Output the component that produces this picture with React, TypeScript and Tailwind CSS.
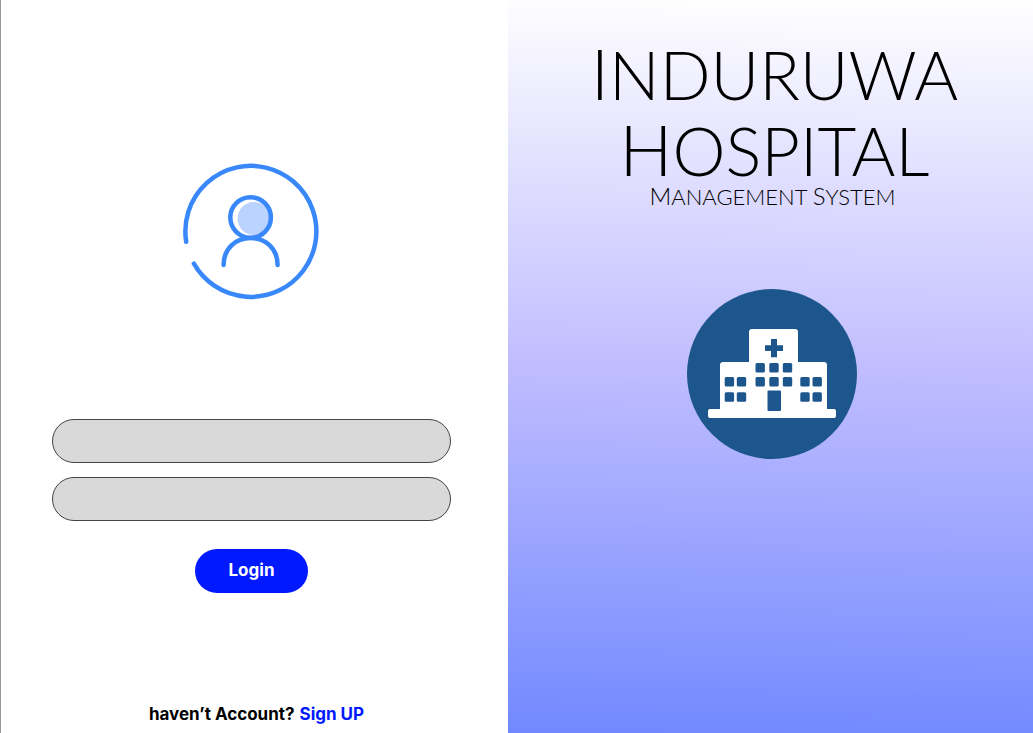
function UserIcon() {
  return (
    <svg viewBox="0 0 138 138" className="size-[138px]" fill="none" stroke="#3888fb" strokeWidth="4.5" strokeLinecap="round" aria-hidden="true">
      <path d="M3.2 78.8A65.5 65.5 0 1 1 10.9 100.7" />
      <circle cx="71" cy="55.5" r="16.5" fill="#bad3ff" stroke="none" />
      <circle cx="67.6" cy="54.5" r="20.3" />
      <path d="M40.6 102C40.6 85.5 52.6 75.1 67.6 75.1S94.6 85.5 94.6 102" />
    </svg>
  );
}

const windows = [
  [68.5, 74], [82.3, 74], [95.8, 74],
  [68.5, 88], [82.3, 88], [95.8, 88],
  [37.7, 88], [49.8, 88], [37.7, 103.3], [49.8, 103.3],
  [113.3, 88], [125.5, 88], [113.3, 103.3], [125.5, 103.3],
];

function HospitalIcon() {
  return (
    <svg viewBox="0 0 170 170" className="size-[170px]" fill="#1d568c" aria-hidden="true">
      <circle cx="85" cy="85" r="85" />
      <path
        fill="#fff"
        d="M65 40H108Q111 40 111 43V73H137Q140 73 140 76V120H147Q149 120 149 122V127Q149 129 147 129H23Q21 129 21 127V122Q21 120 23 120H33V76Q33 73 36 73H62V43Q62 40 65 40Z"
      />
      <path d="M84 50H90V56.2H96V62H90V68.3H84V62H78V56.2H84Z" />
      {windows.map(([x, y]) => (
        <rect key={`${x}-${y}`} x={x} y={y} width="9.4" height="9.4" rx="1.5" />
      ))}
      <rect x="80.5" y="101.5" width="13.5" height="20.5" rx="1" />
    </svg>
  );
}

export default function App() {
  return (
    <main className="grid min-h-screen grid-cols-[508fr_525fr] font-['Inter',sans-serif]">
      <section className="flex flex-col items-center border-l border-[#999] bg-white pt-[163px] pr-[6px] pb-[7px]">
        <UserIcon />
        <form className="mt-[118px] flex w-full flex-col items-center px-[51px]" onSubmit={(e) => e.preventDefault()}>
          <input type="text" aria-label="Username" className="h-11 w-full rounded-full border border-[#444] bg-[#d9d9d9] px-6" />
          <input type="password" aria-label="Password" className="mt-[14px] h-11 w-full rounded-full border border-[#444] bg-[#d9d9d9] px-6" />
          <button type="submit" className="mt-7 h-11 w-[113px] rounded-full bg-[#0019ff] text-[17px] font-bold text-white">
            Login
          </button>
        </form>
        <p className="mt-auto flex gap-[5px] pl-[10px] text-[17px] leading-6 font-bold text-black">
          <span>haven’t Account?</span>
          <a href="#signup" className="text-[#0019ff]">Sign UP</a>
        </p>
      </section>
      <section className="flex flex-col items-center bg-[linear-gradient(181deg,#fff_0%,#bfbcff_51%,#7189ff_100%)] pt-9">
        <h1 className="pl-2 text-center font-['Lato',sans-serif] text-[67px] leading-[76px] font-light text-black uppercase">
          <span className="text-[70px] leading-none">I</span>nduruwa
          <br />
          <span className="text-[70px] leading-none">H</span>ospital
        </h1>
        <p className="mt-[-4px] pl-1 font-['Lato',sans-serif] text-[22px] leading-6 font-light text-black uppercase">
          <span className="text-2xl leading-none">M</span>anagement <span className="text-2xl leading-none">S</span>ystem
        </p>
        <div className="mt-20 pl-[3px]">
          <HospitalIcon />
        </div>
      </section>
    </main>
  );
}
